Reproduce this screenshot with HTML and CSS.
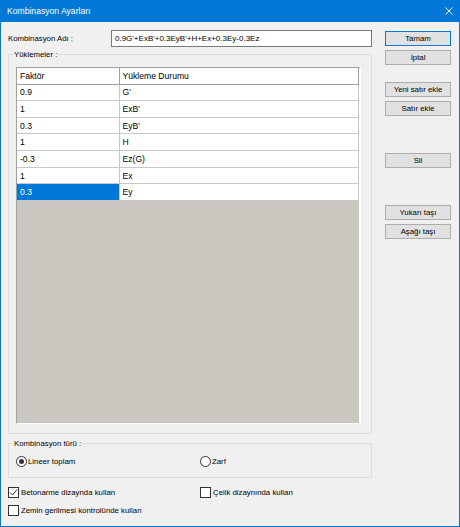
FILE: index.html
```html
<!DOCTYPE html>
<html lang="tr">
<head>
    <meta charset="UTF-8">
    <meta name="viewport" content="width=device-width, initial-scale=1.0">
    <title>Kombinasyon Ayarları</title>
    <link rel="stylesheet" href="styles.css">
</head>
<body>
    <div class="window">
      <div class="titlebar">
        <span class="title">Kombinasyon Ayarları</span>
        <svg class="close" width="8" height="8" viewBox="0 0 8 8">
          <path d="M0.5 0.5 L7.5 7.5 M7.5 0.5 L0.5 7.5" stroke="#fff" stroke-width="1" fill="none"/>
        </svg>
      </div>
      <div class="content">
        <div class="main">
          <div class="name-row">
            <span class="name-label">Kombinasyon Adı :</span>
            <div class="input">0.9G'+ExB'+0.3EyB'+H+Ex+0.3Ey-0.3Ez</div>
          </div>

          <div class="group loads">
            <span class="legend">Yüklemeler :</span>
            <div class="grid">
              <table>
                <colgroup><col class="c1"><col class="c2"></colgroup>
                <thead>
                  <tr><th>Faktör</th><th>Yükleme Durumu</th></tr>
                </thead>
                <tbody>
                  <tr><td>0.9</td><td>G'</td></tr>
                  <tr><td>1</td><td>ExB'</td></tr>
                  <tr><td>0.3</td><td>EyB'</td></tr>
                  <tr><td>1</td><td>H</td></tr>
                  <tr><td>-0.3</td><td>Ez(G)</td></tr>
                  <tr><td>1</td><td>Ex</td></tr>
                  <tr><td class="selected">0.3</td><td>Ey</td></tr>
                </tbody>
              </table>
            </div>
          </div>

          <div class="group kind">
            <span class="legend">Kombinasyon türü :</span>
            <div class="radios">
              <div class="opt"><span class="radio on"></span>Lineer toplam</div>
              <div class="opt"><span class="radio"></span>Zarf</div>
            </div>
          </div>

          <div class="check-row first">
            <div class="opt">
              <span class="check">
                <svg width="9" height="9" viewBox="0 0 9 9"><path d="M1 4.5 L3.5 7 L8 1.5" stroke="#333" stroke-width="1" fill="none"/></svg>
              </span>Betonarme dizaynda kullan
            </div>
            <div class="opt"><span class="check"></span>Çelik dizaynında kullan</div>
          </div>
          <div class="check-row">
            <div class="opt"><span class="check"></span>Zemin gerilmesi kontrolünde kullan</div>
          </div>
        </div>

        <div class="buttons">
          <div class="button default">Tamam</div>
          <div class="button">İptal</div>
          <div class="button gap-s">Yeni satır ekle</div>
          <div class="button">Satır ekle</div>
          <div class="button gap-l">Sil</div>
          <div class="button gap-l">Yukarı taşı</div>
          <div class="button">Aşağı taşı</div>
        </div>
      </div>
    </div>
</body>
</html>
```

FILE: styles.css
```css
html {
  box-sizing: border-box;
}

*,
*:before,
*:after {
  box-sizing: inherit;
}

body {
  margin: 0;
  font-family: "Liberation Sans", Arial, sans-serif;
  font-size: 7.8px;
  color: #000;
  background: #f0f0f0;
}

.window {
  width: 460px;
  height: 527px;
  border: 1px solid #0078d7;
  border-top: 0;
  background: #f0f0f0;
}

.titlebar {
  height: 22px;
  display: flex;
  align-items: center;
  padding: 0 6px 0 6px;
  background: #0078d7;
  color: #fff;
}
.titlebar .title {
  font-size: 8.6px;
}
.titlebar .close {
  margin-left: auto;
}

.content {
  display: flex;
  padding: 8px 0 0 7px;
}

.main {
  width: 364px;
}

.name-row {
  display: flex;
  align-items: center;
  height: 17px;
}
.name-label {
  width: 103px;
}
.input {
  width: 261px;
  height: 17px;
  line-height: 15px;
  padding-left: 3px;
  border: 1px solid #7a7a7a;
  background: #fff;
  font-size: 8px;
}

.group {
  position: relative;
  border: 1px solid #dcdcdc;
}
.group .legend {
  position: absolute;
  top: -6px;
  left: 4px;
  padding: 0 1px;
  line-height: 11px;
  background: #f0f0f0;
}

.loads {
  margin-top: 7px;
  padding: 12px 10px 9px 7px;
}

.grid {
  height: 357px;
  background: #cac7c0;
  border-style: solid;
  border-width: 1px 2px 1px 1px;
  border-color: #a0a0a0 #fff #fff #a0a0a0;
}
.grid table {
  width: 100%;
  border-collapse: collapse;
  table-layout: fixed;
  font-size: 8.6px;
}
.grid col.c1 {
  width: 102px;
}
.grid th,
.grid td {
  padding: 0 3px;
  text-align: left;
  font-weight: normal;
  white-space: nowrap;
}
.grid th {
  height: 16px;
  background: #fff;
  border-right: 1px solid #a0a0a0;
  border-bottom: 1px solid #a0a0a0;
}
.grid td {
  height: 16.65px;
  background: #fff;
  border-right: 1px solid #c8c8c8;
  border-bottom: 1px solid #c8c8c8;
}
.grid td.selected {
  background: #0078d7;
  color: #fff;
}

.kind {
  margin-top: 9px;
  padding: 12px 0 10px 7px;
}
.radios {
  display: grid;
  grid-template-columns: 184px auto;
  height: 11px;
}

.opt {
  display: flex;
  align-items: center;
  height: 11px;
  white-space: nowrap;
}

.radio {
  width: 11px;
  height: 11px;
  margin-right: 1px;
  border: 1px solid #333;
  border-radius: 50%;
  background: #fff;
  display: flex;
  align-items: center;
  justify-content: center;
}
.radio.on:after {
  content: "";
  width: 5px;
  height: 5px;
  border-radius: 50%;
  background: #333;
}

.check-row {
  display: grid;
  grid-template-columns: 192px auto;
  margin-top: 7px;
}
.check-row.first {
  margin-top: 9px;
}
.check {
  width: 11px;
  height: 11px;
  margin-right: 2px;
  border: 1px solid #333;
  background: #fff;
  display: flex;
  align-items: center;
  justify-content: center;
}

.buttons {
  margin-left: 13px;
  padding-top: 1px;
  width: 66px;
}
.button {
  height: 15px;
  margin-top: 4px;
  line-height: 13px;
  text-align: center;
  border: 1px solid #adadad;
  background: #e1e1e1;
}
.button:first-child {
  margin-top: 0;
}
.button.default {
  border-color: #0078d7;
}
.button.gap-s {
  margin-top: 17px;
}
.button.gap-l {
  margin-top: 37px;
}
```
